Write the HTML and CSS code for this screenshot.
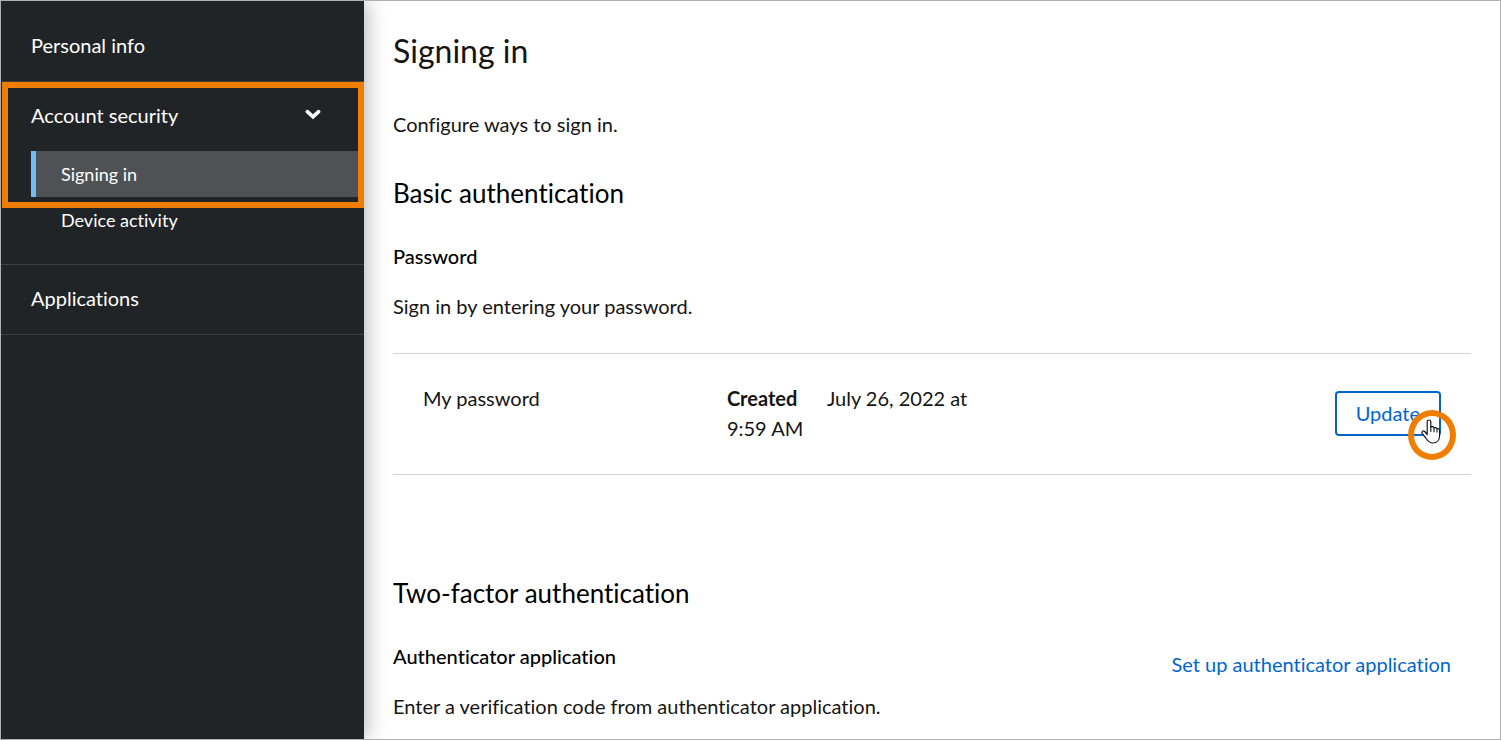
FILE: index.html
```
<!DOCTYPE html>
<html lang="en">
<head>
    <meta charset="UTF-8">
    <meta name="viewport" content="width=device-width, initial-scale=1.0">
    <title>Signing in - Account console</title>
    <link rel="stylesheet" href="styles.css">
</head>
<body>
    <div class="page">
        <nav class="sidebar" aria-label="Account">
            <ul class="nav-list">
                <li class="nav-item"><a class="nav-link" href="#personal-info">Personal info</a></li>
                <li class="nav-item nav-group">
                    <button class="nav-link nav-toggle" type="button" aria-expanded="true">
                        Account security
                        <svg class="chevron" width="16" height="12" viewBox="0 0 16 12" aria-hidden="true">
                            <path d="M2.4 2.6 8 7.8l5.6-5.2" fill="none" stroke="currentColor" stroke-width="3.6" stroke-linecap="round"/>
                        </svg>
                    </button>
                    <ul class="sub-list">
                        <li><a class="sub-link current" href="#signing-in" aria-current="page">Signing in</a></li>
                        <li><a class="sub-link" href="#device-activity">Device activity</a></li>
                    </ul>
                    <div class="highlight"></div>
                </li>
                <li class="nav-item"><a class="nav-link" href="#applications">Applications</a></li>
            </ul>
        </nav>

        <main class="content">
            <h1>Signing in</h1>
            <p class="intro">Configure ways to sign in.</p>

            <section class="category">
                <h2>Basic authentication</h2>
                <h3>Password</h3>
                <p class="help">Sign in by entering your password.</p>
                <div class="credential">
                    <div class="cell">My password</div>
                    <div class="cell"><strong>Created</strong> July 26, 2022 at 9:59 AM</div>
                    <div class="action">
                        <button class="update-button" type="button">Update</button>
                        <div class="pointer">
                            <svg width="20" height="25" viewBox="0 0 20 25" aria-hidden="true">
                                <path d="M6.2 15.5V2.8a1.8 1.8 0 0 1 3.6 0v5.400c.4-.8 2.900-.7 3.200.6.600-.6 2.700-.3 3 .9.800-.4 2.600-.1 2.600 1.600v5.200c0 4.400-2.500 7.500-6.600 7.500-3.300 0-5-1.500-6.600-4.200L1.200 14.400c-1-1.600.9-3.200 2.500-1.900z" fill="#fff" stroke="#151522" stroke-width="1.2" stroke-linejoin="round"/>
                                <path d="M9.800 8.200v4.400M13 8.800v4M16 9.700v3.400" fill="none" stroke="#151522" stroke-width="1.1" stroke-linecap="round"/>
                            </svg>
                        </div>
                    </div>
                </div>
            </section>

            <section class="category">
                <h2>Two-factor authentication</h2>
                <div class="type-header">
                    <div>
                        <h3>Authenticator application</h3>
                        <p class="help">Enter a verification code from authenticator application.</p>
                    </div>
                    <a class="setup-link" href="#setup">Set up authenticator application</a>
                </div>
            </section>
        </main>
    </div>
</body>
</html>
```

FILE: styles.css
```
* {
    box-sizing: border-box;
}
body {
    margin: 0;
    font-family: Lato, "Open Sans", sans-serif;
    font-size: 20px;
    font-variant-ligatures: none;
    line-height: 30px;
    color: #151515;
    background-color: #fff;
}
h1, h2, h3, p, ul {
    margin: 0;
    padding: 0;
}
ul {
    list-style: none;
}
button {
    font: inherit;
    font-variant-ligatures: none;
    cursor: pointer;
}
a {
    text-decoration: none;
}
.page {
    display: flex;
    height: 100vh;
    border: 1px solid #b0b0b0;
    overflow: hidden;
}

/* Sidebar */
.sidebar {
    flex: 0 0 363px;
    padding-top: 11px;
    background-color: #212427;
    box-shadow: 2px 0 20px rgba(3, 3, 3, 0.3);
}
.nav-item {
    border-bottom: 1px solid #3c3f42;
}
.nav-link {
    display: block;
    padding: 18px 30px 21px;
    color: #fff;
}
.nav-group {
    position: relative;
    padding-bottom: 21px;
}
.nav-toggle {
    display: flex;
    justify-content: space-between;
    align-items: center;
    width: 100%;
    padding-right: 43px;
    border: none;
    background: none;
    text-align: left;
}
.sub-list {
    padding-left: 30px;
    font-size: 18px;
}
.sub-link {
    display: block;
    padding: 8px 25px;
    border-left: 5px solid transparent;
    color: #fff;
}
.sub-link.current {
    background-color: #4f5255;
    border-left-color: #73bcf7;
}
.highlight {
    position: absolute;
    top: 0;
    left: 1px;
    right: 0;
    height: 126px;
    border: 6px solid #ef7d00;
    pointer-events: none;
}

/* Content */
.content {
    flex: 1;
    min-width: 0;
    padding: 30px 29px;
}
h1 {
    font-size: 32px;
    font-weight: 400;
    line-height: 40px;
}
h2 {
    font-size: 26px;
    font-weight: 400;
    line-height: 40px;
    color: #000;
}
h3 {
    margin-top: 28px;
    font-size: 20px;
    font-weight: 500;
    color: #000;
}
.intro {
    margin: 38px 0 34px;
}
.help {
    margin-top: 20px;
}
.category + .category {
    margin-top: 98px;
}
.credential {
    display: grid;
    grid-template-columns: 1fr 1fr 1fr auto;
    align-items: start;
    margin-top: 32px;
    padding: 29px 30px 31px;
    border-top: 1px solid #d2d2d2;
    border-bottom: 1px solid #d2d2d2;
}
.cell {
    padding-right: 30px;
}
.cell strong {
    margin-right: 25px;
    font-weight: 700;
}
.action {
    grid-column: 4;
    position: relative;
    align-self: center;
}
.update-button {
    display: block;
    padding: 5px 19px 6px;
    border: 2px solid #06c;
    border-radius: 4px;
    background-color: #fff;
    color: #06c;
}
.pointer {
    position: absolute;
    right: -15px;
    bottom: -24px;
    display: flex;
    justify-content: center;
    align-items: flex-start;
    width: 48px;
    height: 50px;
    padding: 3px 2px 0 0;
    border: 6px solid #ef7d00;
    border-radius: 50%;
    pointer-events: none;
}
.type-header {
    display: flex;
    justify-content: space-between;
    align-items: center;
    padding-right: 20px;
}
.setup-link {
    padding-bottom: 6px;
    color: #06c;
}
```
